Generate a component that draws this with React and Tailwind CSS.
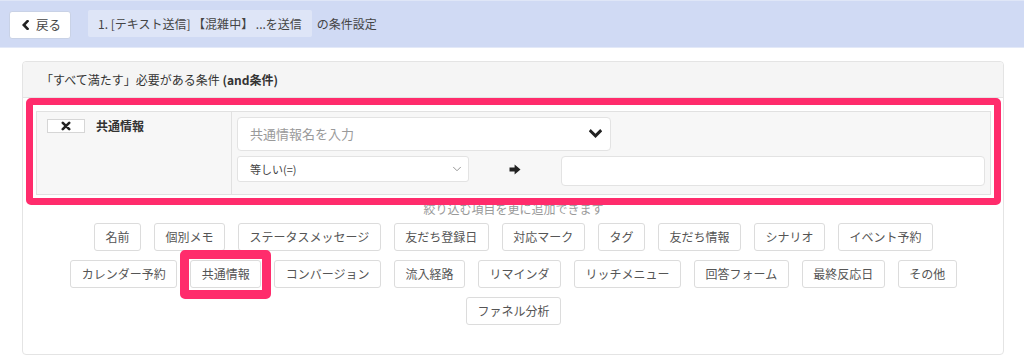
import React from "react";
import { ChevronDown } from "lucide-react";

const font = { fontFamily: '"Noto Sans CJK JP", "Noto Sans", sans-serif' };

const row1 = ["名前", "個別メモ", "ステータスメッセージ", "友だち登録日", "対応マーク", "タグ", "友だち情報", "シナリオ", "イベント予約"];
const row2 = ["カレンダー予約", "共通情報", "コンバージョン", "流入経路", "リマインダ", "リッチメニュー", "回答フォーム", "最終反応日", "その他", "ファネル分析"];

function Chip({ label, highlight }) {
  return (
    <div className="relative">
      <div className="h-[28px] px-[10.5px] flex items-center border border-[#dcdcdc] rounded-[3px] bg-white text-[12px] text-[#555] whitespace-nowrap">
        {label}
      </div>
      {highlight && (
        <div className="absolute -left-[10px] -right-[10px] -top-[10px] -bottom-[11px] border-[9px] border-[#ff2c6c] rounded-[5px] pointer-events-none" />
      )}
    </div>
  );
}

export default function App() {
  return (
    <div className="w-[1024px] h-[364px] bg-white overflow-hidden text-[#333]" style={font}>
      {/* top bar */}
      <div className="h-[48px] bg-[#d0daf4] border-t border-[#dfe6f7] border-b border-b-[#e3e9f8] flex items-start pt-[9px] pl-[9px]">
        <div className="mt-[1px] h-[28px] w-[62px] bg-white border border-[#c9d2e6] rounded-[3px] flex items-center pl-[12px] gap-[7px] text-[12.5px] text-[#444]">
          <svg width="7" height="10" viewBox="0 0 7 10">
            <polyline points="5.5,1.2 1.8,5 5.5,8.8" fill="none" stroke="#222" strokeWidth="2.6" strokeLinecap="square" strokeLinejoin="miter" />
          </svg>
          <span>戻る</span>
        </div>
        <div className="ml-[17px] h-[27px] px-[10px] bg-[#dee5f7] rounded-[2px] flex items-center text-[12px] text-[#444] whitespace-nowrap">
          1. [テキスト送信] 【混雑中】 ...を送信
        </div>
        <div className="ml-[5px] h-[27px] flex items-center text-[12px] text-[#444]">の条件設定</div>
      </div>

      {/* panel */}
      <div className="ml-[22px] mt-[13px] w-[982px] h-[294px] border border-[#e4e4e4] rounded-[4px]">
        <div className="h-[36px] bg-[#f5f5f5] border-b border-[#e4e4e4] flex items-center pl-[18px] text-[12px] text-[#333] rounded-t-[4px]">
          「すべて満たす」必要がある条件&nbsp;<span className="font-bold">(and条件)</span>
        </div>

        <div className="pt-[13px] pl-[13px] pr-[12px]">
          <div className="relative">
            <div className="flex border border-[#e1e1e1] bg-[#f7f7f7]">
              <div className="w-[195px] border-r border-[#e1e1e1] pl-[10px] pt-[6px] flex items-start gap-[11px]">
                <div className="w-[38px] h-[14px] bg-white border border-[#d6d6d6] flex items-center justify-center mt-[1px]">
                  <svg width="10" height="10" viewBox="0 0 10 10">
                    <path d="M1.8 1.8 L8.2 8.2 M8.2 1.8 L1.8 8.2" stroke="#222" strokeWidth="2.6" strokeLinecap="round" />
                  </svg>
                </div>
                <div className="text-[12px] font-bold leading-[16px] text-[#333]">共通情報</div>
              </div>
              <div className="flex-1 p-[5px] pb-[8px]">
                <div className="w-[374px] h-[34px] bg-white border border-[#e3e3e3] rounded-[4px] flex items-center justify-between pl-[12px] pr-[8px]">
                  <span className="text-[13px] text-[#9a9a9a]">共通情報名を入力</span>
                  <svg width="13" height="10" viewBox="0 0 13 10">
                    <polyline points="1.8,2.2 6.5,6.8 11.2,2.2" fill="none" stroke="#222" strokeWidth="3" strokeLinecap="square" />
                  </svg>
                </div>
                <div className="mt-[5px] flex items-start">
                  <div className="w-[232px] h-[26px] bg-white border border-[#e3e3e3] rounded-[3px] flex items-center justify-between pl-[12px] pr-[4px]">
                    <span className="text-[11px] text-[#444]">等しい(=)</span>
                    <ChevronDown className="w-[14px] h-[14px] text-[#888]" strokeWidth={1.5} />
                  </div>
                  <div className="w-[92px] h-[26px] flex items-center justify-center">
                    <svg width="12" height="11" viewBox="0 0 12 11">
                      <path d="M0.5 3.6 H5.6 V0.6 L11.5 5.5 L5.6 10.4 V7.4 H0.5 Z" fill="#222" />
                    </svg>
                  </div>
                  <div className="flex-1 h-[30px] bg-white border border-[#e3e3e3] rounded-[4px]" />
                </div>
              </div>
            </div>
            <div className="absolute -left-[10px] -right-[10px] -top-[13px] -bottom-[10px] border-[7px] border-[#ff2c6c] rounded-[5px] pointer-events-none" />
          </div>

          <div className="mt-[5px] text-center text-[12px] leading-[18px] text-[#999]">絞り込む項目を更に追加できます</div>

          <div className="mt-[5px] mx-[30px] flex flex-wrap justify-center gap-x-[13px] gap-y-[9px]">
            {row1.map((l) => (
              <Chip key={l} label={l} />
            ))}
            {row2.map((l) => (
              <Chip key={l} label={l} highlight={l === "共通情報"} />
            ))}
          </div>
        </div>
      </div>
    </div>
  );
}
